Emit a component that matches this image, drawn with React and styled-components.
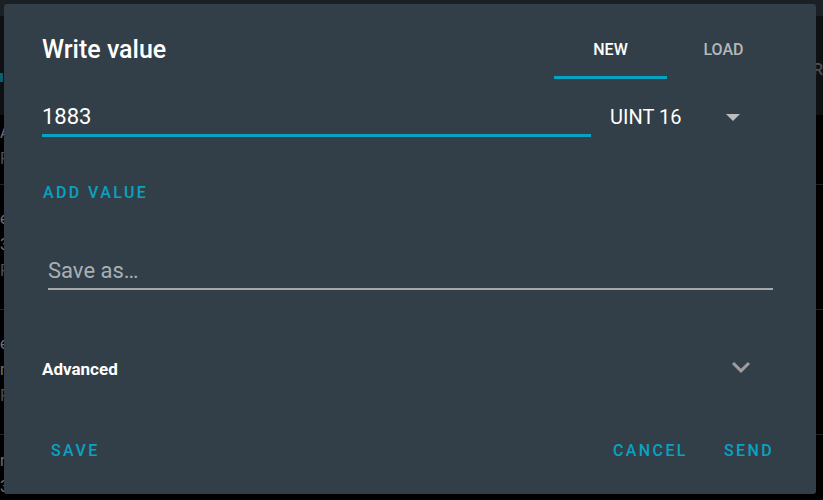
import styled, { createGlobalStyle } from "styled-components";

const GlobalStyle = createGlobalStyle`
  * { box-sizing: border-box; }
  body {
    margin: 0;
    background: #000;
    font-family: Roboto, "Liberation Sans", sans-serif;
  }
`;

const ACCENT = "#08a2c2";

const Page = styled.div`
  position: relative;
  width: 823px;
  height: 500px;
  overflow: hidden;
  background: #000;
`;

const TopStrip = styled.div`
  height: 16px;
  background: #1b2025;
`;

const HeaderArea = styled.div`
  height: 99px;
  background: #0e1113;
  display: flex;
  align-items: flex-start;
  justify-content: space-between;
`;

const TabSliver = styled.div`
  margin-top: 57px;
  width: 3px;
  height: 9px;
  background: #0a5f70;
`;

const HeaderText = styled.span`
  margin-top: 44px;
  color: #4a4f53;
  font-size: 16px;
  font-weight: 500;
`;

const ListRow = styled.div`
  height: ${(p) => p.h}px;
  border-bottom: 1px solid #1e2326;
  display: flex;
  flex-direction: column;
  padding-top: ${(p) => p.pad}px;
  gap: 6px;
`;

const ListText = styled.span`
  font-size: 16px;
  line-height: 20px;
  color: ${(p) => (p.dim ? "#4d5256" : "#6e7377")};
  white-space: nowrap;
`;

const Dialog = styled.div`
  position: absolute;
  left: 4px;
  top: 4px;
  width: 812px;
  height: 490px;
  background: #333f48;
  border-radius: 3px;
  padding: 0 36px 0 38px;
  display: flex;
  flex-direction: column;
  color: #fff;
`;

const Header = styled.div`
  display: flex;
  height: 75px;
`;

const Title = styled.h2`
  margin: 0;
  padding-top: 32px;
  font-size: 25px;
  line-height: 28px;
  font-weight: 500;
`;

const Tabs = styled.div`
  margin-left: auto;
  display: flex;
`;

const Tab = styled.div`
  width: 113px;
  height: 75px;
  padding-top: 38px;
  text-align: center;
  font-size: 16px;
  line-height: 16px;
  font-weight: 500;
  color: ${(p) => (p.active ? "#fff" : "#b4b8bb")};
  border-bottom: 3px solid ${(p) => (p.active ? ACCENT : "transparent")};
`;

const ValueRow = styled.div`
  margin-top: 24px;
  display: flex;
  align-items: flex-start;
`;

const ValueInput = styled.div`
  width: 549px;
  font-size: 22px;
  line-height: 28px;
  padding-bottom: 3px;
  border-bottom: 3px solid ${ACCENT};
`;

const Select = styled.div`
  margin-left: 19px;
  flex: 1;
  display: flex;
  align-items: center;
  justify-content: space-between;
  padding-right: 40px;
  font-size: 20px;
  line-height: 28px;
`;

const Caret = styled.span`
  width: 0;
  height: 0;
  border-left: 7.5px solid transparent;
  border-right: 7.5px solid transparent;
  border-top: 7.5px solid #bdbdbd;
`;

const TextButton = styled.span`
  display: inline-block;
  padding: 0 ${(p) => p.pad ?? 4}px;
  font-size: 16px;
  line-height: 20px;
  font-weight: 500;
  letter-spacing: 2.4px;
  color: ${ACCENT};
  text-transform: uppercase;
`;

const AddRow = styled.div`
  padding-top: 46px;
  display: flex;
`;

const SaveField = styled.div`
  margin: 54px 7px 0 6px;
  font-size: 22px;
  line-height: 28px;
  color: #a9b0b5;
  padding-bottom: 3px;
  border-bottom: 2px solid #a6a9ab;
`;

const AdvancedRow = styled.div`
  margin-top: 59px;
  height: 36px;
  display: flex;
  align-items: center;
  justify-content: space-between;
  padding-right: 21px;
`;

const AdvancedLabel = styled.span`
  padding-top: 3px;
  font-size: 17px;
  line-height: 20px;
  font-weight: 700;
`;

const Footer = styled.div`
  margin-top: 56px;
  display: flex;
  padding: 0 2px 0 5px;
`;

const Spacer = styled.div`
  flex: 1;
`;

const ExpandIcon = () => (
  <svg width="36" height="36" viewBox="0 0 24 24" fill="#9e9e9e">
    <path d="M16.59 8.59L12 13.17 7.41 8.59 6 10l6 6 6-6z" />
  </svg>
);

export default function App() {
  return (
    <Page>
      <GlobalStyle />
      <TopStrip />
      <HeaderArea>
        <TabSliver />
        <HeaderText>R</HeaderText>
      </HeaderArea>
      <ListRow h={70} pad={8}>
        <ListText>A</ListText>
        <ListText dim>R</ListText>
      </ListRow>
      <ListRow h={125} pad={24}>
        <ListText>e</ListText>
        <ListText>3</ListText>
        <ListText dim>R</ListText>
      </ListRow>
      <ListRow h={125} pad={24}>
        <ListText>e</ListText>
        <ListText>n</ListText>
        <ListText dim>R</ListText>
      </ListRow>
      <ListRow h={125} pad={16}>
        <ListText>n</ListText>
        <ListText>3</ListText>
      </ListRow>

      <Dialog>
        <Header>
          <Title>Write value</Title>
          <Tabs>
            <Tab active>NEW</Tab>
            <Tab>LOAD</Tab>
          </Tabs>
        </Header>
        <ValueRow>
          <ValueInput>1883</ValueInput>
          <Select>
            <span>UINT 16</span>
            <Caret />
          </Select>
        </ValueRow>
        <AddRow>
          <TextButton pad={1}>Add value</TextButton>
        </AddRow>
        <SaveField>Save as…</SaveField>
        <AdvancedRow>
          <AdvancedLabel>Advanced</AdvancedLabel>
          <ExpandIcon />
        </AdvancedRow>
        <Footer>
          <TextButton>Save</TextButton>
          <Spacer />
          <TextButton>Cancel</TextButton>
          <TextButton style={{ marginLeft: 28 }}>Send</TextButton>
        </Footer>
      </Dialog>
    </Page>
  );
}
